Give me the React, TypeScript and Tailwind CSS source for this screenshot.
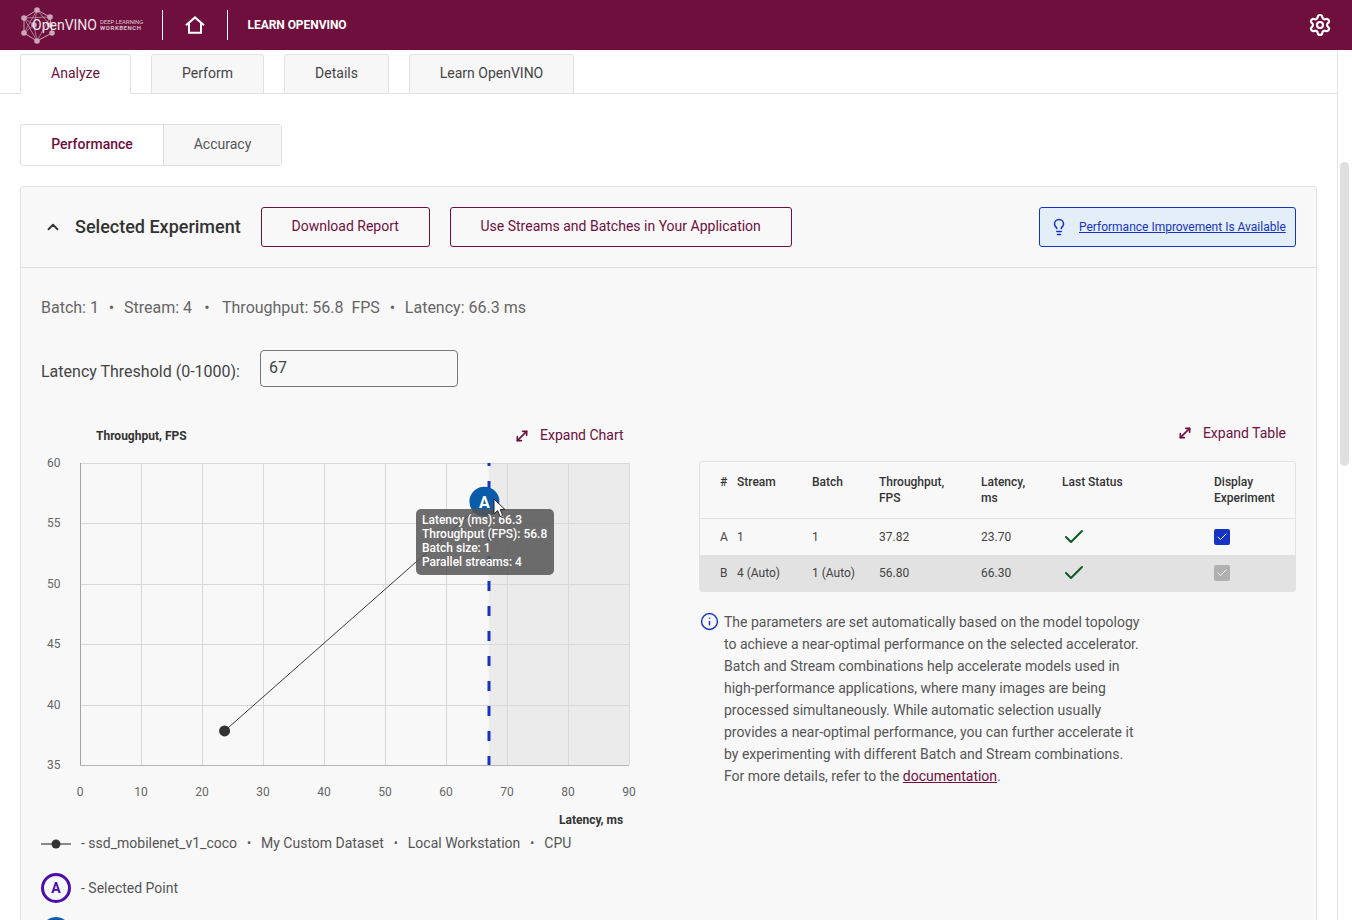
import React from "react";
import { Check, ChevronUp, Info, Lightbulb, MoveDiagonal, Settings } from "lucide-react";

const xTicks = [0, 10, 20, 30, 40, 50, 60, 70, 80, 90];
const yTicks = [60, 55, 50, 45, 40, 35];
const px = (v: number) => 39 + v * 6.1;
const py = (v: number) => 345 - (v - 35) * 12.08;

const Logo = () => {
  const nodes = [
    [17, 3], [30, 10], [32, 26], [17, 34], [4, 26], [4, 11], [14, 18], [30, 18],
  ];
  return (
    <div className="relative h-[36px] w-[124px] shrink-0">
      <svg width="36" height="37" viewBox="0 0 36 37" className="absolute left-0 top-0" fill="none" stroke="#c9a6b8" strokeWidth="1">
        <path d="M17 3 30 10 32 26 17 34 4 26 4 11Z" />
        <path d="M17 3 4 26M17 3 30 18M4 11 30 10M4 11 17 34M30 10 17 34M4 11 14 18 4 26M14 18 17 3M14 18 17 34" opacity="0.7" />
        {nodes.map(([cx, cy], i) => (
          <circle key={i} cx={cx} cy={cy} r="2.8" fill="#c9a6b8" stroke="none" />
        ))}
      </svg>
      <span className="absolute left-[12px] top-[7px] font-['Roboto',sans-serif] text-[14px] leading-[22px] text-[#f0e6eb]">OpenVINO</span>
      <div className="absolute left-[80px] top-[12px] font-['Roboto',sans-serif] text-[6px] leading-[6px] text-[#d8c0cc]">
        <div className="whitespace-nowrap tracking-[-0.1px]">DEEP LEARNING</div>
        <div className="whitespace-nowrap font-bold tracking-[0.55px]">WORKBENCH</div>
      </div>
    </div>
  );
};

const Tab = ({ label, active, className }: { label: string; active?: boolean; className: string }) => (
  <div
    className={`flex h-[40px] items-center justify-center rounded-t-[3px] border border-[#e2e2e2] pb-[2px] text-[14px] ${className} ${
      active ? "border-b-white bg-white text-[#6e0f3d]" : "bg-[#f7f7f7] text-[#444]"
    }`}
  >
    {label}
  </div>
);

const Chart = () => (
  <div className="relative h-[410px] w-[610px]">
    <svg width="610" height="410" viewBox="0 0 610 410" className="absolute left-0 top-0">
      <rect x={px(67)} y={43} width={px(90) - px(67)} height={302} fill="#ebebeb" />
      {xTicks.slice(1).map((t) => (
        <line key={t} x1={px(t) + 0.5} x2={px(t) + 0.5} y1={43} y2={345} stroke="#d8d8d8" />
      ))}
      {yTicks.map((t) => (
        <line key={t} x1={39} x2={px(90)} y1={Math.round(py(t)) + 0.5} y2={Math.round(py(t)) + 0.5} stroke="#d8d8d8" />
      ))}
      <line x1={39.5} x2={39.5} y1={43} y2={345} stroke="#a3a3a3" />
      <line x1={39} x2={px(90)} y1={345.5} y2={345.5} stroke="#b5b5b5" />
      <line x1={448} x2={448} y1={43} y2={345} stroke="#1733c4" strokeWidth="3" strokeDasharray="10 15" strokeDashoffset="7" />
      {xTicks.map((t) => (
        <text key={t} x={px(t)} y={376} textAnchor="middle" fontSize="12" fill="#666" fontFamily="Roboto, sans-serif">
          {t}
        </text>
      ))}
      {yTicks.map((t) => (
        <text key={t} x={6} y={py(t) + 4} fontSize="12" fill="#666" fontFamily="Roboto, sans-serif">
          {t}
        </text>
      ))}
      <line x1={px(23.7)} y1={py(37.82)} x2={px(66.3)} y2={py(56.8)} stroke="#3a3a3a" strokeWidth="1" />
      <circle cx={px(23.7)} cy={py(37.82)} r="5.5" fill="#333" />
      <circle cx={px(66.3)} cy={py(56.8)} r="15" fill="#0a5cab" />
      <text x={px(66.3)} y={py(56.8) + 6} textAnchor="middle" fontSize="16" fontWeight="700" fill="#fff" fontFamily="Roboto, sans-serif">
        A
      </text>
    </svg>
    <div className="absolute left-[55px] top-[8px] text-[12px] font-bold leading-[16px] text-[#333]">Throughput, FPS</div>
    <div className="absolute left-[473px] top-[5px] flex items-center gap-[10px] text-[14px] leading-[20px] text-[#6e0f3d]">
      <MoveDiagonal size={16} strokeWidth={2.4} className="mt-[2px]" />
      Expand Chart
    </div>
    <div className="absolute left-[375px] top-[89px] h-[66px] w-[138px] whitespace-nowrap rounded-[5px] bg-[#555]/85 px-[6px] py-[4px] text-[12px] font-medium leading-[14px] text-white">
      <div>Latency (ms): 66.3</div>
      <div>Throughput (FPS): 56.8</div>
      <div>Batch size: 1</div>
      <div>Parallel streams: 4</div>
    </div>
    <svg width="14" height="20" viewBox="0 0 14 20" className="absolute left-[452px] top-[78px]">
      <path d="M1 1v15l3.6-3.4 2.6 6 2.6-1.1-2.6-5.9H12Z" fill="#fff" stroke="#222" strokeWidth="1" />
    </svg>
    <div className="absolute left-[518px] top-[392px] whitespace-nowrap text-[12px] font-bold leading-[16px] text-[#333]">Latency, ms</div>
  </div>
);

const rows = [
  { id: "A", stream: "1", batch: "1", tp: "37.82", lat: "23.70", selected: false },
  { id: "B", stream: "4 (Auto)", batch: "1 (Auto)", tp: "56.80", lat: "66.30", selected: true },
];
const gridCols = "grid grid-cols-[17px_75px_67px_102px_81px_152px_1fr] pl-[20px]";

const ExperimentTable = () => (
  <div className="overflow-hidden rounded-[3px] border border-[#e3e3e3] text-[12px] text-[#444]">
    <div className={`${gridCols} h-[57px] items-start border-b border-[#e3e3e3] pt-[12px] font-medium leading-[16px] text-[#333]`}>
      <div>#</div>
      <div>Stream</div>
      <div>Batch</div>
      <div>Throughput,<br />FPS</div>
      <div>Latency,<br />ms</div>
      <div>Last Status</div>
      <div>Display<br />Experiment</div>
    </div>
    {rows.map((r) => (
      <div key={r.id} className={`${gridCols} h-[36px] items-center ${r.selected ? "bg-[#e2e2e2]" : ""}`}>
        <div>{r.id}</div>
        <div>{r.stream}</div>
        <div>{r.batch}</div>
        <div>{r.tp}</div>
        <div>{r.lat}</div>
        <div><Check size={24} strokeWidth={2} className="text-[#0f5a24]" /></div>
        <div>
          <div className={`flex h-[16px] w-[16px] items-center justify-center rounded-[2px] ${r.selected ? "bg-[#b0b0b0]" : "bg-[#1733c4]"}`}>
            <Check size={12} strokeWidth={2} className="text-white" />
          </div>
        </div>
      </div>
    ))}
  </div>
);

export default function App() {
  return (
    <div className="flex h-[920px] w-[1352px] flex-col overflow-hidden bg-white font-['Roboto',sans-serif]">
      <header className="flex h-[50px] shrink-0 items-center bg-[#6e0f3d] pl-[20px] pr-[20px] text-white">
        <Logo />
        <div className="ml-[18px] h-[30px] w-px bg-white" />
        <svg width="20" height="18" viewBox="0 0 20 18" fill="none" stroke="#fff" strokeWidth="2" className="ml-[22px]">
          <path d="M1 9.2 10 1.4l9 7.8M4 7.2V16.8h12V7.2" />
        </svg>
        <div className="ml-[22px] h-[30px] w-px bg-white" />
        <div className="ml-[19.5px] text-[12px] font-bold tracking-[-0.05px]">LEARN OPENVINO</div>
        <Settings size={24} strokeWidth={2.2} className="ml-auto" />
      </header>

      <div className="flex min-h-0 flex-1">
        <main className="min-w-0 flex-1 border-r border-[#e4e4e4]">
          <div className="flex h-[44px] items-end gap-[20px] border-b border-[#e2e2e2] pl-[20px]">
            <Tab label="Analyze" active className="-mb-px h-[40px] w-[111px]" />
            <Tab label="Perform" className="-mb-px w-[113px]" />
            <Tab label="Details" className="-mb-px w-[105px]" />
            <Tab label="Learn OpenVINO" className="-mb-px w-[165px]" />
          </div>

          <div className="px-[20px] pt-[30px]">
            <div className="flex h-[42px] w-[262px] rounded-[3px] border border-[#dedede] text-[14px]">
              <div className="flex w-[143px] items-center justify-center border-r border-[#dedede] pb-[2px] font-medium text-[#6e0f3d]">Performance</div>
              <div className="flex flex-1 items-center justify-center bg-[#f7f7f7] pb-[2px] text-[#555]">Accuracy</div>
            </div>

            <section className="mt-[20px] h-[800px] rounded-[3px] border border-[#e2e2e2] bg-[#f8f8f8]">
              <div className="flex h-[81px] items-center border-b border-[#e2e2e2] pl-[23px] pr-[20px]">
                <ChevronUp size={18} strokeWidth={2.4} className="text-[#333]" />
                <h2 className="ml-[13px] text-[18px] font-medium leading-[24px] text-[#333]">Selected Experiment</h2>
                <button className="ml-[20px] h-[40px] w-[169px] rounded-[3px] border border-[#6e0f3d] pb-[2px] text-[14px] text-[#6e0f3d]">Download Report</button>
                <button className="ml-[20px] h-[40px] w-[342px] rounded-[3px] border border-[#6e0f3d] pb-[2px] text-[14px] text-[#6e0f3d]">Use Streams and Batches in Your Application</button>
                <div className="ml-auto flex h-[40px] w-[257px] items-center rounded-[3px] border border-[#1733c4] bg-[#e4eef8] pl-[10px]">
                  <Lightbulb size={18} strokeWidth={2} className="text-[#1733c4]" />
                  <a className="ml-[11px] text-[12px] text-[#1733c4] underline">Performance Improvement Is Available</a>
                </div>
              </div>

              <div className="px-[20px] pt-[29px]">
                <div className="flex h-[22px] items-center whitespace-pre text-[16px] leading-[22px] text-[#666]">
                  <span>Batch: 1</span>
                  <span className="w-[25px] text-center">•</span>
                  <span>Stream: 4</span>
                  <span className="w-[30px] text-center">•</span>
                  <span>Throughput: 56.8  FPS</span>
                  <span className="w-[25px] text-center">•</span>
                  <span>Latency: 66.3 ms</span>
                </div>

                <div className="mt-[31px] flex items-center">
                  <label className="w-[219px] pt-[6px] text-[16px] text-[#444]">Latency Threshold (0-1000):</label>
                  <div className="flex h-[37px] w-[198px] items-center rounded-[4px] border border-[#777] px-[8px] pb-[2px] text-[16px] text-[#444]">67</div>
                </div>

                <div className="mt-[33px] flex">
                  <div className="w-[658px] shrink-0">
                    <Chart />
                    <div className="mt-[3px] flex items-center text-[14px] leading-[20px] text-[#555]">
                      <svg width="30" height="12" viewBox="0 0 30 12" className="mt-[2px] shrink-0">
                        <line x1="0" x2="30" y1="6" y2="6" stroke="#666" strokeWidth="1.5" />
                        <circle cx="15" cy="6" r="4.5" fill="#333" />
                      </svg>
                      <span className="ml-[10px] whitespace-pre">- ssd_mobilenet_v1_coco</span>
                      <span className="w-[24px] text-center text-[12px]">•</span>
                      <span>My Custom Dataset</span>
                      <span className="w-[24px] text-center text-[12px]">•</span>
                      <span>Local Workstation</span>
                      <span className="w-[24px] text-center text-[12px]">•</span>
                      <span>CPU</span>
                    </div>
                    <div className="mt-[20px] flex items-center text-[14px] text-[#555]">
                      <div className="flex h-[30px] w-[30px] items-center justify-center rounded-full border-[3px] border-[#4a0fa8] text-[14px] font-bold text-[#4a0fa8]">A</div>
                      <span className="ml-[10px]">- Selected Point</span>
                    </div>
                    <div className="mt-[14px] h-[30px] w-[30px] rounded-full border-[3px] border-[#0a5cab]" />
                  </div>

                  <div className="w-[597px]">
                    <div className="flex h-[41px] items-start justify-end gap-[10px] pr-[10px] pt-[3px] text-[14px] leading-[20px] text-[#6e0f3d]">
                      <MoveDiagonal size={16} strokeWidth={2.4} className="mt-[2px]" />
                      Expand Table
                    </div>
                    <ExperimentTable />
                    <div className="mt-[19px] flex">
                      <Info size={19} strokeWidth={1.8} className="ml-px mt-[1px] shrink-0 text-[#1733c4]" />
                      <p className="ml-[5px] w-[418px] text-[14px] leading-[22px] text-[#555]">
                        The parameters are set automatically based on the model topology to achieve a near-optimal performance on the selected accelerator. Batch and Stream combinations help accelerate models used in high-performance applications, where many images are being processed simultaneously. While automatic selection usually provides a near-optimal performance, you can further accelerate it by experimenting with different Batch and Stream combinations. For more details, refer to the <a className="text-[#6e0f3d] underline">documentation</a>.
                      </p>
                    </div>
                  </div>
                </div>
              </div>
            </section>
          </div>
        </main>

        <aside className="w-[14px] shrink-0 pl-[2px] pt-[112px]">
          <div className="h-[304px] w-[9px] rounded-[5px] bg-[#e0e0e0]" />
        </aside>
      </div>
    </div>
  );
}
